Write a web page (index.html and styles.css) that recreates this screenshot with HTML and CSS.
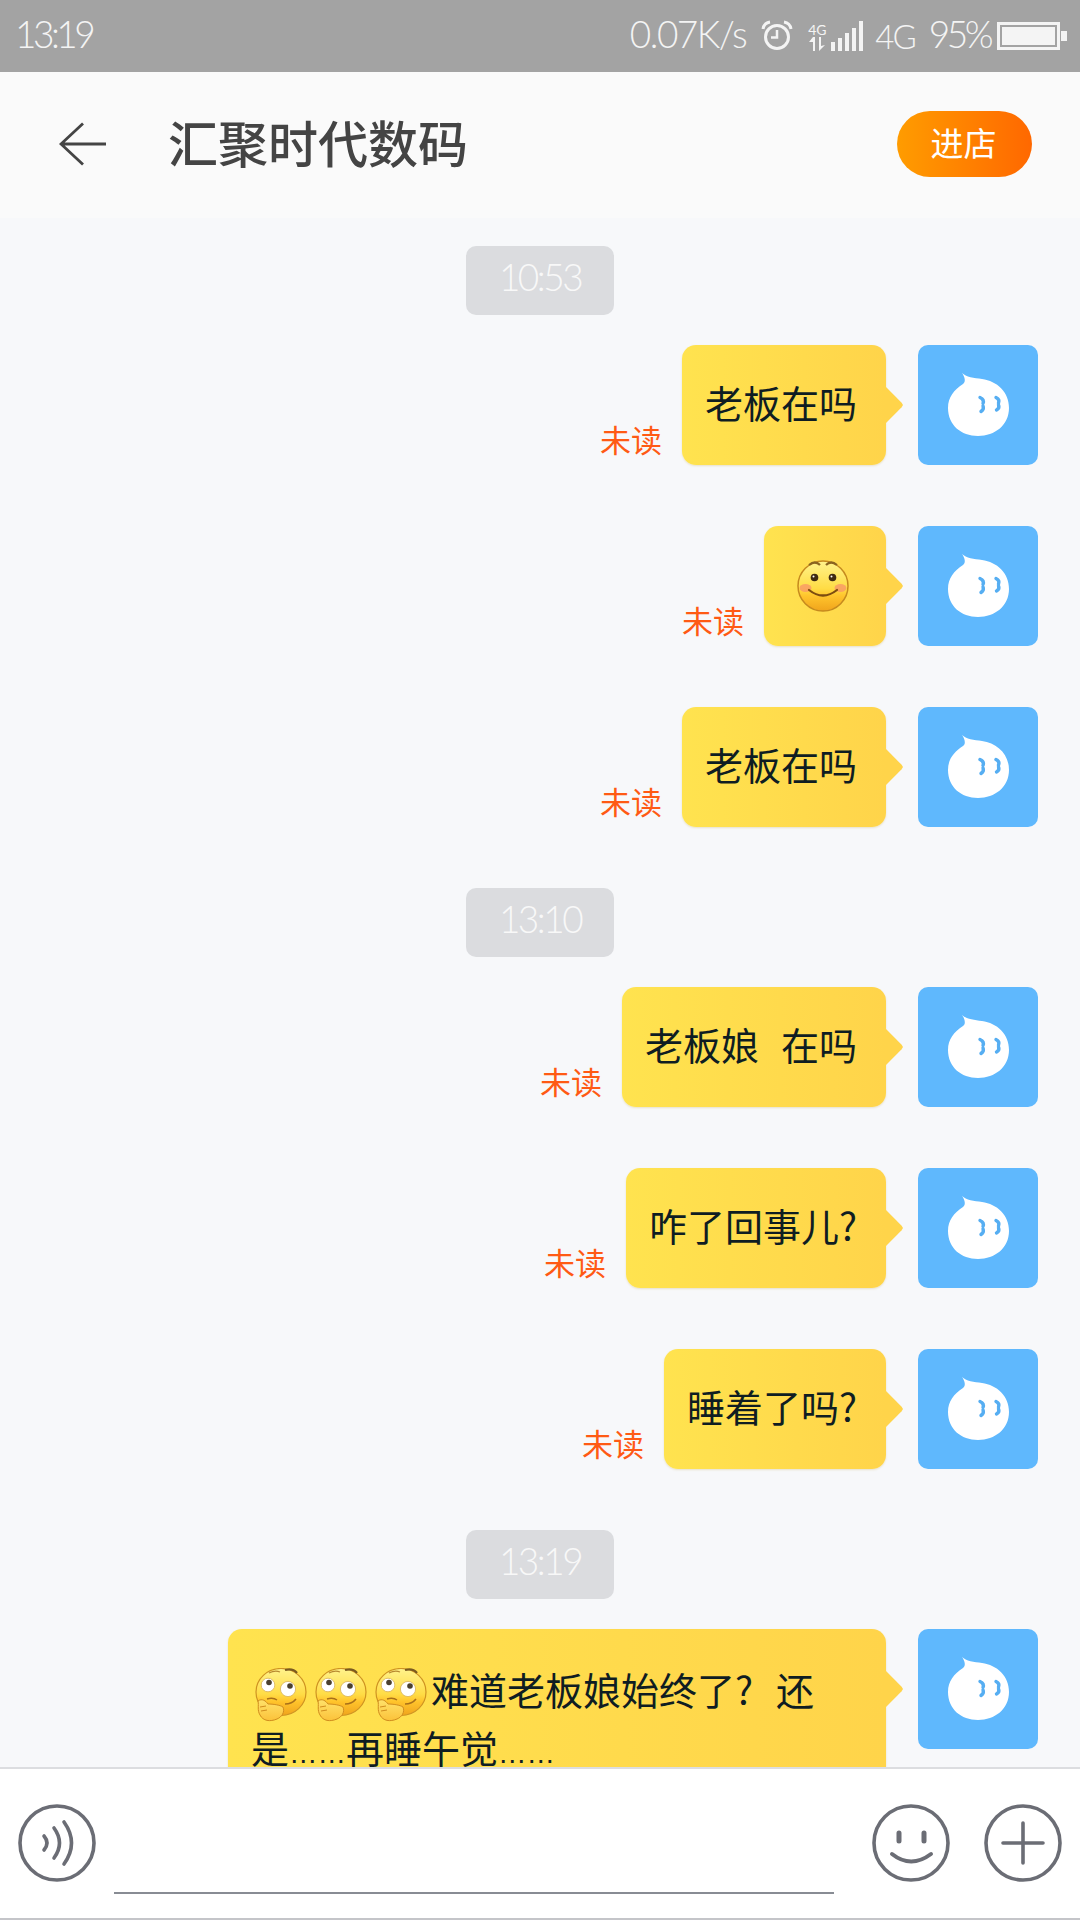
FILE: index.html
```html
<!DOCTYPE html>
<html lang="zh-CN">
<head>
<meta charset="utf-8">
<title>汇聚时代数码</title>
<link rel="stylesheet" href="styles.css">
</head>
<body>
<svg class="sprite" aria-hidden="true">
  <defs>
    <linearGradient id="faceFill" x1="0" y1="0" x2="0" y2="1">
      <stop offset="0" stop-color="#fff38c"/>
      <stop offset="0.55" stop-color="#ffdc45"/>
      <stop offset="0.7" stop-color="#ffc42c"/>
      <stop offset="1" stop-color="#f0a41c"/>
    </linearGradient>
    <linearGradient id="handFill" x1="0" y1="0" x2="0" y2="1">
      <stop offset="0" stop-color="#ffe26a"/>
      <stop offset="1" stop-color="#fbc23a"/>
    </linearGradient>
    <symbol id="blob" viewBox="0 0 120 120">
      <rect width="120" height="120" fill="#5fb8fd"/>
      <path fill="#fff" d="M44 28C48 32 56 33 64 34C79 36 91 47 91 63C91 80 77 91 60 91C43 91 30 80 30 63C30 52 36 45 45 39C48 37 47 32 44 28Z"/>
      <g fill="none" stroke="#56aef2" stroke-width="3.400" stroke-linecap="round">
        <path d="M62 52.500Q66.500 54.500 65 58.500"/>
        <path d="M65 61Q66.500 64 63 66.500"/>
        <path d="M78 52.500Q82 54.500 80.500 58"/>
        <path d="M80.500 60Q82 63 78.500 65"/>
      </g>
    </symbol>
    <symbol id="smile" viewBox="0 0 52 52">
      <circle cx="26" cy="26" r="25" fill="url(#faceFill)" stroke="#c68a1e" stroke-width="1.500"/>
      <path d="M12 5Q18 0 23 5M29 5Q34 0 40 5" fill="none" stroke="#8a6420" stroke-width="2.200"/>
      <circle cx="17.500" cy="17.500" r="3.800" fill="#3f2a12"/>
      <circle cx="35.500" cy="17.500" r="3.800" fill="#3f2a12"/>
      <circle cx="16.500" cy="16.500" r="1" fill="#fff"/>
      <circle cx="34.500" cy="16.500" r="1" fill="#fff"/>
      <ellipse cx="8.500" cy="28" rx="6" ry="4" fill="#f8936a" opacity=".75"/>
      <ellipse cx="43.500" cy="28" rx="6" ry="4" fill="#f8936a" opacity=".75"/>
      <path d="M12 30Q26 41 40 30" fill="none" stroke="#7d4c10" stroke-width="2.200" stroke-linecap="round"/>
    </symbol>
    <symbol id="think" viewBox="0 0 52 54">
      <ellipse cx="26" cy="24" rx="25" ry="23.500" fill="url(#faceFill)" stroke="#cf9322" stroke-width="1.200"/>
      <path d="M14 5Q20 2 25 4" fill="none" stroke="#b88a30" stroke-width="1.200"/>
      <path d="M30 2Q38 0 42 5" fill="none" stroke="#7a5a20" stroke-width="2.200"/>
      <circle cx="13" cy="17" r="6.800" fill="#fff" stroke="#d9b25a" stroke-width=".8"/>
      <circle cx="33" cy="21" r="7.600" fill="#fff" stroke="#d9b25a" stroke-width=".8"/>
      <circle cx="14" cy="14.500" r="2.800" fill="#4a4030"/>
      <circle cx="35" cy="18" r="2.800" fill="#4a4030"/>
      <path d="M12 31Q18 29 22 32" fill="none" stroke="#a8701a" stroke-width="1.400"/>
      <path d="M30 36Q37 36 41 31" fill="none" stroke="#a8701a" stroke-width="1.600"/>
      <path fill="url(#handFill)" stroke="#d18d1e" stroke-width="1" d="M3 33C7 30 11 33 13 36C18 36 25 37 28 39C30 44 27 49 22 51C15 54 8 53 5 47C2 42 4 38 3 33Z"/>
      <path d="M5 39L11 38M6 43L12 42" fill="none" stroke="#d18d1e" stroke-width="1"/>
    </symbol>
  </defs>
</svg>

<div class="phone">
  <header class="status">
    <span class="status-time">13:19</span>
    <div class="status-right">
      <span class="status-text speed">0.07K/s</span>
      <svg class="ic-alarm" viewBox="0 0 32 32" fill="none" stroke="#f4f4f4">
        <circle cx="16" cy="17" r="11.500" stroke-width="3"/>
        <path d="M16 10v7.500h-6" stroke-width="2.500"/>
        <path d="M2 9Q3 3 9 2M23 2Q29 3 30 9" stroke-width="3"/>
      </svg>
      <div class="net">
        <span class="net-label">4G</span>
        <svg class="ic-arrows" viewBox="0 0 18 14" fill="#f4f4f4"><path d="M5 0h2v14H5V5H1zM11 0h2v9l4-1-6 6z"/></svg>
      </div>
      <svg class="ic-signal" viewBox="0 0 33 30" fill="#f4f4f4">
        <rect x="0" y="21" width="4" height="9"/><rect x="7" y="17" width="4" height="13"/><rect x="14" y="12" width="4" height="18"/><rect x="21" y="7" width="4" height="23"/><rect x="28" y="0" width="4" height="30"/>
      </svg>
      <span class="status-text four-g">4G</span>
      <span class="status-text pct">95%</span>
      <svg class="ic-battery" viewBox="0 0 70 28">
        <rect x="1.500" y="1.500" width="60" height="25" fill="none" stroke="#f4f4f4" stroke-width="3"/>
        <rect x="5" y="5" width="53" height="18" fill="#f4f4f4"/>
        <rect x="64" y="9" width="6" height="10" fill="#f4f4f4"/>
      </svg>
    </div>
  </header>

  <nav class="nav">
    <svg class="ic-back" viewBox="0 0 48 44" fill="none" stroke="#444" stroke-width="2.800"><path d="M24 1.500L2 22l22 20.500M2 22h45"/></svg>
    <h1 class="title">汇聚时代数码</h1>
    <button class="shop">进店</button>
  </nav>

  <main class="chat">
    <div class="stamp">10:53</div>
    <div class="row">
      <span class="unread">未读</span>
      <div class="bubble">老板在吗</div>
      <svg class="avatar"><use href="#blob"/></svg>
    </div>
    <div class="row">
      <span class="unread">未读</span>
      <div class="bubble bubble-emoji"><svg class="face"><use href="#smile"/></svg></div>
      <svg class="avatar"><use href="#blob"/></svg>
    </div>
    <div class="row">
      <span class="unread">未读</span>
      <div class="bubble">老板在吗</div>
      <svg class="avatar"><use href="#blob"/></svg>
    </div>

    <div class="stamp">13:10</div>
    <div class="row">
      <span class="unread">未读</span>
      <div class="bubble bubble-spaced">老板娘&nbsp;&nbsp;在吗</div>
      <svg class="avatar"><use href="#blob"/></svg>
    </div>
    <div class="row">
      <span class="unread">未读</span>
      <div class="bubble">咋了回事儿?</div>
      <svg class="avatar"><use href="#blob"/></svg>
    </div>
    <div class="row">
      <span class="unread">未读</span>
      <div class="bubble">睡着了吗?</div>
      <svg class="avatar"><use href="#blob"/></svg>
    </div>

    <div class="stamp">13:19</div>
    <div class="row">
      <div class="bubble bubble-long"><svg class="think"><use href="#think"/></svg><svg class="think"><use href="#think"/></svg><svg class="think"><use href="#think"/></svg>难道老板娘始终了<span class="wide-mark">?</span>还<br>是<span class="dots">……</span>再睡午觉<span class="dots">……</span></div>
      <svg class="avatar"><use href="#blob"/></svg>
    </div>
  </main>

  <footer class="composer">
    <svg class="ic-round" viewBox="0 0 78 78" fill="none" stroke="#6b6d75" stroke-width="3.600" stroke-linecap="round">
      <circle cx="39" cy="39" r="37"/>
      <path d="M26 32Q32 39 26 46M36 24Q47 39 36 54M46 18Q61 39 46 60"/>
    </svg>
    <div class="input"></div>
    <svg class="ic-round" viewBox="0 0 78 78" fill="none" stroke="#6b6d75" stroke-width="3.600" stroke-linecap="round">
      <circle cx="39" cy="39" r="37"/>
      <path d="M27 29v8M52 29v8" stroke-width="5"/>
      <path d="M20 50Q39 65 59 50" stroke-width="4"/>
    </svg>
    <svg class="ic-round" viewBox="0 0 78 78" fill="none" stroke="#6b6d75" stroke-width="3.600" stroke-linecap="round">
      <circle cx="39" cy="39" r="37"/>
      <path d="M19 39h40M39 19v40"/>
    </svg>
  </footer>
</div>
</body>
</html>
```

FILE: styles.css
```css
* { box-sizing: border-box; }

html, body {
  margin: 0;
  padding: 0;
}

body {
  font-family: "Noto Sans CJK SC", "Noto Sans", sans-serif;
}

.sprite {
  display: block;
  width: 0;
  height: 0;
}

.phone {
  width: 1080px;
  height: 1920px;
  display: flex;
  flex-direction: column;
  overflow: hidden;
  background: #f7f8fa;
}

/* status bar */
.status {
  flex: 0 0 72px;
  background: #a3a3a3;
  color: #f4f4f4;
  display: flex;
  align-items: center;
  justify-content: space-between;
  padding: 0 13px 0 15px;
}

.status-time,
.status-text {
  font-family: Lato, "Open Sans", sans-serif;
  font-weight: 300;
  font-size: 37px;
  letter-spacing: -3.500px;
  line-height: 1;
  margin-bottom: 5px;
}

.status-right {
  display: flex;
  align-items: center;
}

.speed { letter-spacing: -1.500px; }
.ic-alarm { width: 32px; height: 32px; margin-left: 15px; }
.net {
  width: 18px;
  margin-left: 15px;
  display: flex;
  flex-direction: column;
  align-items: center;
}
.net-label {
  font-family: Lato, sans-serif;
  font-size: 14px;
  line-height: 15px;
}
.ic-arrows { width: 18px; height: 14px; display: block; }
.ic-signal { width: 33px; height: 30px; margin-left: 5px; }
.four-g { margin-left: 11px; margin-bottom: 0; font-size: 33px; letter-spacing: -2px; }
.pct { margin-left: 14px; }
.ic-battery { width: 70px; height: 28px; margin-left: 7px; }

/* nav bar */
.nav {
  flex: 0 0 146px;
  background: #fafafa;
  display: flex;
  align-items: center;
  padding: 0 48px 2px 59px;
}

.ic-back { width: 48px; height: 44px; flex: none; }

.title {
  flex: 1;
  margin: 0 0 6px 61px;
  font-size: 50px;
  font-weight: 500;
  line-height: 1;
  color: #444;
}

.shop {
  width: 135px;
  height: 66px;
  border: 0;
  padding: 0 2px 4px 0;
  border-radius: 33px;
  background: linear-gradient(90deg, #ff9c00, #ff6800);
  color: #fff;
  font-family: inherit;
  font-size: 33px;
}

/* conversation */
.chat {
  flex: 1;
  min-height: 0;
  overflow: hidden;
  display: flex;
  flex-direction: column;
  padding: 28px 42px 0 0;
}

.stamp {
  flex: none;
  align-self: center;
  margin: 0 0 30px 42px;
  height: 69px;
  padding: 0 33px;
  border-radius: 10px;
  background: #dbdcdf;
  color: #f8f8f8;
  font-family: Lato, "Open Sans", sans-serif;
  font-weight: 300;
  font-size: 37px;
  letter-spacing: -2.500px;
  line-height: 62px;
}

.row {
  flex: none;
  display: flex;
  justify-content: flex-end;
  align-items: flex-start;
  margin-bottom: 61px;
}

.unread {
  align-self: flex-end;
  margin: 0 20px 10px 0;
  color: #ff5a14;
  font-size: 31px;
  line-height: 32px;
}

.bubble {
  position: relative;
  margin-right: 32px;
  padding: 26px 29px 32px 23px;
  border-radius: 14px;
  background: linear-gradient(90deg, #ffe34f, #ffd44a);
  box-shadow: 0 1px 2px rgba(190, 160, 60, .25);
  color: #0f1d22;
  font-size: 38px;
  line-height: 62px;
  white-space: nowrap;
}

.bubble::after {
  content: "";
  position: absolute;
  top: 42px;
  right: -17px;
  width: 34px;
  height: 36px;
  background: #ffd44a;
  clip-path: polygon(50% 0, 96% 44%, 100% 50%, 96% 56%, 50% 100%);
}

.bubble-spaced { word-spacing: 2.500px; }

.bubble-emoji {
  width: 122px;
  height: 120px;
  padding: 0 4px 0 0;
  display: flex;
  align-items: center;
  justify-content: center;
}

.face { width: 52px; height: 52px; }

.bubble-long {
  width: 658px;
  padding-top: 31px;
  line-height: 58px;
}

.think {
  width: 52px;
  height: 54px;
  margin: -8px 4px;
  vertical-align: middle;
}

.wide-mark {
  font-family: "Noto Sans CJK TC", sans-serif;
  margin-right: 23px;
}

.dots {
  font-family: "Liberation Sans", sans-serif;
  font-size: 28.500px;
}

.avatar {
  flex: none;
  width: 120px;
  height: 120px;
  border-radius: 10px;
}

/* composer */
.composer {
  flex: 0 0 153px;
  background: #fff;
  border-top: 2px solid #dcdde0;
  border-bottom: 2px solid #c4c5c9;
  display: flex;
  align-items: center;
  padding: 0 18px 1px;
  position: relative;
}

.ic-round { width: 78px; height: 78px; flex: none; }
.ic-round + .ic-round { margin-left: 34px; }

.input {
  flex: 1;
  align-self: flex-end;
  height: 2px;
  margin: 0 38px 23px 18px;
  background: #888c94;
}
```
